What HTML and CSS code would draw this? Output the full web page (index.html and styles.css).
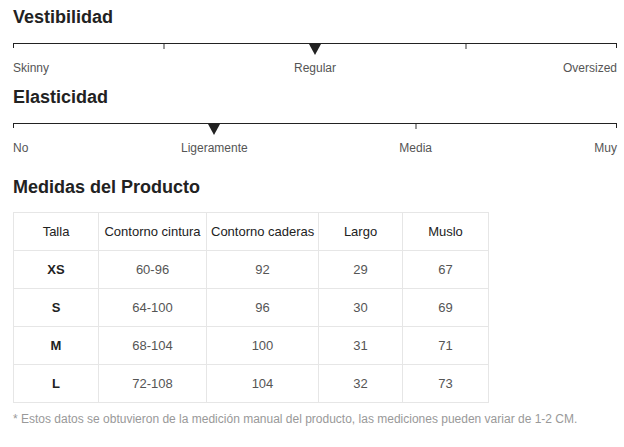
FILE: index.html
```html
<!DOCTYPE html>
<html lang="es">
<head>
<meta charset="utf-8">
<link rel="stylesheet" href="styles.css">
</head>
<body>
<section class="fit">
  <h2 class="title">Vestibilidad</h2>
  <div class="scale">
    <div class="track">
      <span class="tick end" style="left:0%"></span>
      <span class="tick" style="left:25%"></span>
      <span class="tick" style="left:50%"></span>
      <span class="tick" style="left:75%"></span>
      <span class="tick end" style="left:100%"></span>
      <span class="marker" style="left:50%"></span>
    </div>
    <div class="labels">
      <span class="lbl first" style="left:0%">Skinny</span>
      <span class="lbl mid" style="left:50%">Regular</span>
      <span class="lbl last" style="left:100%">Oversized</span>
    </div>
  </div>
</section>
<section class="fit fit2">
  <h2 class="title">Elasticidad</h2>
  <div class="scale">
    <div class="track">
      <span class="tick end" style="left:0%"></span>
      <span class="tick" style="left:33.333%"></span>
      <span class="tick" style="left:66.667%"></span>
      <span class="tick end" style="left:100%"></span>
      <span class="marker" style="left:33.333%"></span>
    </div>
    <div class="labels">
      <span class="lbl first" style="left:0%">No</span>
      <span class="lbl mid" style="left:33.333%">Ligeramente</span>
      <span class="lbl mid" style="left:66.667%">Media</span>
      <span class="lbl last" style="left:100%">Muy</span>
    </div>
  </div>
</section>
<section class="measures">
  <h2 class="title">Medidas del Producto</h2>
  <table class="size-table">
    <colgroup>
      <col class="c1"><col class="c2"><col class="c3"><col class="c4"><col class="c5">
    </colgroup>
    <thead>
      <tr><th>Talla</th><th>Contorno cintura</th><th>Contorno caderas</th><th>Largo</th><th>Muslo</th></tr>
    </thead>
    <tbody>
      <tr><td class="size">XS</td><td>60-96</td><td>92</td><td>29</td><td>67</td></tr>
      <tr><td class="size">S</td><td>64-100</td><td>96</td><td>30</td><td>69</td></tr>
      <tr><td class="size">M</td><td>68-104</td><td>100</td><td>31</td><td>71</td></tr>
      <tr><td class="size">L</td><td>72-108</td><td>104</td><td>32</td><td>73</td></tr>
    </tbody>
  </table>
  <p class="note">* Estos datos se obtuvieron de la medición manual del producto, las mediciones pueden variar de 1-2 CM.</p>
</section>
</body>
</html>
```

FILE: styles.css
```css
html, body {
  margin: 0;
  padding: 0;
  background: #fff;
}
body {
  font-family: "Liberation Sans", Arial, sans-serif;
  color: #333;
  padding: 5px 7px 0 13px;
}
.title {
  margin: 0;
  font-size: 18px;
  line-height: 24px;
  font-weight: 700;
  color: #222;
}
.scale {
  padding-top: 14px;
  margin-bottom: 10px;
}
.fit2 .scale {
  margin-bottom: 20px;
}
.track {
  position: relative;
  height: 0;
  border-top: 1px solid #222;
}
.tick {
  position: absolute;
  top: 0;
  width: 2px;
  height: 5px;
  margin-left: -1px;
  background: #999;
}
.tick.end {
  width: 1px;
  height: 4px;
  margin-left: 0;
  background: #222;
}
.tick.end[style*="100%"] {
  margin-left: -1px;
}
.marker {
  position: absolute;
  top: 0;
  width: 0;
  height: 0;
  margin-left: -6.5px;
  border-left: 6.5px solid transparent;
  border-right: 6.5px solid transparent;
  border-top: 11px solid #222;
}
.labels {
  position: relative;
  height: 14px;
  margin-top: 17px;
  font-size: 12px;
  line-height: 14px;
  color: #555;
}
.lbl {
  position: absolute;
  top: 0;
  white-space: nowrap;
}
.lbl.mid {
  transform: translateX(-50%);
}
.lbl.last {
  transform: translateX(-100%);
}
.fit2 .labels {
  margin-top: 17px;
}
.measures .title {
  margin-bottom: 13px;
}
.size-table {
  border-collapse: collapse;
  table-layout: fixed;
  width: 475px;
  font-size: 13px;
}
.c1 { width: 85px; }
.c2 { width: 108px; }
.c3 { width: 112px; }
.c4 { width: 84px; }
.c5 { width: 86px; }
.size-table th,
.size-table td {
  border: 1px solid #e6e6e6;
  height: 38px;
  padding: 0 4px;
  text-align: center;
  vertical-align: middle;
  white-space: nowrap;
  box-sizing: border-box;
}
.size-table th {
  font-weight: 400;
  color: #222;
}
.size-table td {
  color: #555;
}
.size-table td.size {
  font-weight: 700;
  color: #222;
}
.note {
  margin: 9px 0 0;
  font-size: 12px;
  line-height: 14px;
  color: #999;
}
```
